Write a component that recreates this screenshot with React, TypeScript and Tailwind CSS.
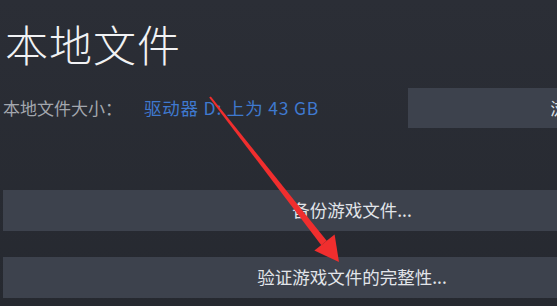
const FONT = '"Noto Sans CJK SC", "Noto Sans", sans-serif';

function WideButton({ label, className = "" }: { label: string; className?: string }) {
    return (
        <button
            type="button"
            className={`flex h-[41px] w-[698px] shrink-0 items-center justify-center bg-[#3d424d] text-[17.5px] text-[#e2e5ea] ${className}`}
        >
            {label}
        </button>
    );
}

export default function App() {
    return (
        <div
            className="relative h-[306px] w-[557px] overflow-hidden bg-gradient-to-b from-[#2b2e36] to-[#262930]"
            style={{ fontFamily: FONT }}
        >
            <div className="flex w-[760px] flex-col pl-[3px]">
                <h1 className="ml-[2px] mt-[22px] h-[52px] text-[43px] font-light leading-none tracking-[1px] text-[#f1f2f4]">
                    本地文件
                </h1>
                <div className="mt-[14px] flex h-[40px] items-center">
                    <span className="w-[141px] text-[17px] text-[#a3a7ae]">本地文件大小：</span>
                    <span className="w-[264px] text-[17.5px] tracking-[0.8px] text-[#3f79cf]">驱动器 D: 上为 43 GB</span>
                    <button
                        type="button"
                        className="flex h-[40px] w-[334px] items-center justify-center bg-[#3d424d] text-[17.5px] text-[#e2e5ea]"
                    >
                        浏览...
                    </button>
                </div>
                <WideButton label="备份游戏文件..." className="mt-[62px]" />
                <WideButton label="验证游戏文件的完整性..." className="mt-[26px]" />
            </div>

            <svg
                className="pointer-events-none absolute left-0 top-0"
                width="557"
                height="306"
                viewBox="0 0 557 306"
            >
                <polygon
                    points="210.8,96.4 209.2,97.6 321.3,245.2 326.7,240.8"
                    fill="#f02e2e"
                />
                <polygon points="339,262 334.6,234.4 314.4,250.6" fill="#f02e2e" />
            </svg>
        </div>
    );
}
